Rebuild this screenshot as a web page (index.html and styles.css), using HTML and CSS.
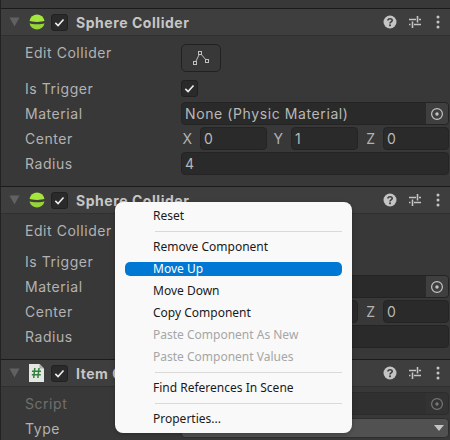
FILE: index.html
```html
<!DOCTYPE html>
<html lang="en">
<head>
<meta charset="utf-8">
<title>Inspector</title>
<link rel="stylesheet" href="styles.css">
</head>
<body>
<svg class="defs" width="0" height="0" aria-hidden="true">
  <symbol id="sphere" viewBox="0 0 16 16">
    <path d="M.5 6.800A7.600 7.600 0 0 1 15.500 6.800C13 8.300 3 8.300 .5 6.800Z" fill="#a5e63c"/>
    <path d="M.5 9.200C3 10.700 13 10.700 15.500 9.200A7.600 7.600 0 0 1 .5 9.200Z" fill="#97d435"/>
  </symbol>
  <symbol id="check" viewBox="0 0 18 18">
    <path d="M4 9.400 7.300 12.600 13.800 5.400" fill="none" stroke="#eee" stroke-width="1.900"/>
  </symbol>
  <symbol id="help" viewBox="0 0 14 14">
    <circle cx="7" cy="7" r="6.500" fill="#c4c4c4"/>
    <path d="M4.900 5.500C5 3.200 9.200 3.200 9.200 5.400 9.200 6.900 7 6.900 7 8.500" fill="none" stroke="#3e3e3e" stroke-width="1.600"/>
    <rect x="6.100" y="9.400" width="1.800" height="1.800" fill="#3e3e3e"/>
  </symbol>
  <symbol id="sliders" viewBox="0 0 14 14">
    <path d="M1 4.500H8M11 4.500H13M9.500 1V7.500M1 9.500H2.500M6 9.500H13M4.500 6.500V13" fill="none" stroke="#c4c4c4" stroke-width="1.600"/>
  </symbol>
  <symbol id="dots" viewBox="0 0 4 14">
    <circle cx="2" cy="2" r="1.500" fill="#c4c4c4"/>
    <circle cx="2" cy="7" r="1.500" fill="#c4c4c4"/>
    <circle cx="2" cy="12" r="1.500" fill="#c4c4c4"/>
  </symbol>
  <symbol id="picker" viewBox="0 0 14 14">
    <circle cx="7" cy="7" r="5.400" fill="none" stroke="currentColor" stroke-width="1.200"/>
    <circle cx="7" cy="7" r="1.700" fill="currentColor"/>
  </symbol>
  <symbol id="tri" viewBox="0 0 10 10">
    <path d="M0 .5H10L5 9.500Z" fill="#616161"/>
  </symbol>
  <symbol id="edit" viewBox="0 0 18 16">
    <path d="M3 13 8 3 15 11" fill="none" stroke="#c0c0c0"/>
    <rect x="1.500" y="11.500" width="3" height="3" fill="#383838" stroke="#c0c0c0"/>
    <rect x="6.500" y="1.500" width="3" height="3" fill="#383838" stroke="#c0c0c0"/>
    <rect x="13.500" y="9.500" width="3" height="3" fill="#383838" stroke="#c0c0c0"/>
  </symbol>
</svg>

<main class="inspector">
  <div class="top-gap"></div>

  <section class="comp">
    <header class="head">
      <svg class="tri"><use href="#tri"/></svg>
      <svg class="ico"><use href="#sphere"/></svg>
      <span class="box"><svg class="tick"><use href="#check"/></svg></span>
      <span class="title">Sphere Collider</span>
      <span class="tools">
        <svg class="tool"><use href="#help"/></svg>
        <svg class="tool"><use href="#sliders"/></svg>
        <svg class="tool-dots"><use href="#dots"/></svg>
      </span>
    </header>
    <div class="body">
      <div class="row row-edit">
        <span class="label">Edit Collider</span>
        <span class="edit-btn"><svg class="edit-ico"><use href="#edit"/></svg></span>
      </div>
      <div class="row row-check">
        <span class="label">Is Trigger</span>
        <span class="box"><svg class="tick"><use href="#check"/></svg></span>
      </div>
      <div class="row">
        <span class="label">Material</span>
        <span class="field">None (Physic Material)<span class="pick"><svg class="pick-ico"><use href="#picker"/></svg></span></span>
      </div>
      <div class="row">
        <span class="label">Center</span>
        <span class="vec">
          <span class="axis">X</span><span class="field">0</span>
          <span class="axis">Y</span><span class="field">1</span>
          <span class="axis">Z</span><span class="field">0</span>
        </span>
      </div>
      <div class="row">
        <span class="label">Radius</span>
        <span class="field">4</span>
      </div>
    </div>
  </section>

  <section class="comp">
    <header class="head">
      <svg class="tri"><use href="#tri"/></svg>
      <svg class="ico"><use href="#sphere"/></svg>
      <span class="box"><svg class="tick"><use href="#check"/></svg></span>
      <span class="title">Sphere Collider</span>
      <span class="tools">
        <svg class="tool"><use href="#help"/></svg>
        <svg class="tool"><use href="#sliders"/></svg>
        <svg class="tool-dots"><use href="#dots"/></svg>
      </span>
    </header>
    <div class="body">
      <div class="row row-edit row-edit-compact">
        <span class="label">Edit Collider</span>
      </div>
      <div class="row row-check">
        <span class="label">Is Trigger</span>
        <span class="box"><svg class="tick"><use href="#check"/></svg></span>
      </div>
      <div class="row">
        <span class="label">Material</span>
        <span class="field"><span class="pick"><svg class="pick-ico"><use href="#picker"/></svg></span></span>
      </div>
      <div class="row">
        <span class="label">Center</span>
        <span class="vec">
          <span class="axis">X</span><span class="field">0</span>
          <span class="axis">Y</span><span class="field">1</span>
          <span class="axis">Z</span><span class="field">0</span>
        </span>
      </div>
      <div class="row">
        <span class="label">Radius</span>
        <span class="field">4</span>
      </div>
    </div>
  </section>

  <section class="comp">
    <header class="head">
      <svg class="tri"><use href="#tri"/></svg>
      <svg class="script-ico" viewBox="0 0 15 18">
        <path d="M0 0H10.500L15 4.500V18H0Z" fill="#e4e6e2"/>
        <path d="M10.500 0V4.500H15Z" fill="#a9aca6"/>
        <path d="M5.800 4 4.700 14M10 4 8.900 14M3 7.300H12M2.800 10.700H11.800" fill="none" stroke="#33803f" stroke-width="1.500"/>
      </svg>
      <span class="box"><svg class="tick"><use href="#check"/></svg></span>
      <span class="title">Item Collector</span>
      <span class="tools">
        <svg class="tool"><use href="#help"/></svg>
        <svg class="tool"><use href="#sliders"/></svg>
        <svg class="tool-dots"><use href="#dots"/></svg>
      </span>
    </header>
    <div class="body body-tight">
      <div class="row">
        <span class="label label-dim">Script</span>
        <span class="field field-dim"><span class="pick pick-dim"><svg class="pick-ico"><use href="#picker"/></svg></span></span>
      </div>
      <div class="row row-type">
        <span class="label">Type</span>
        <span class="select"><span class="caret"></span></span>
      </div>
    </div>
  </section>
</main>

<nav class="menu">
  <div class="item">Reset</div>
  <div class="sep"></div>
  <div class="item">Remove Component</div>
  <div class="item item-active">Move Up</div>
  <div class="item">Move Down</div>
  <div class="item">Copy Component</div>
  <div class="item item-off">Paste Component As New</div>
  <div class="item item-off">Paste Component Values</div>
  <div class="sep"></div>
  <div class="item">Find References In Scene</div>
  <div class="sep"></div>
  <div class="item">Properties...</div>
</nav>
</body>
</html>
```
FILE: styles.css
```css
* { box-sizing: border-box; }

html, body {
  margin: 0;
  height: 440px;
  overflow: hidden;
  background: #383838;
}

body {
  font-family: Inter, "Noto Sans", sans-serif;
  position: relative;
}

.defs { position: absolute; }

.inspector {
  border-left: 1px solid #232323;
  height: 440px;
  overflow: hidden;
}

.top-gap { height: 8px; }

.comp { border-top: 1px solid #1b1b1b; }

.head {
  height: 27px;
  background: #3e3e3e;
  border-bottom: 1px solid #303030;
  display: flex;
  align-items: center;
  padding-left: 8px;
}

.tri { width: 11px; height: 10px; margin-right: 9px; }
.ico { width: 16px; height: 16px; margin-right: 6px; }
.script-ico { width: 15px; height: 18px; margin-right: 7px; }

.box {
  width: 17px;
  height: 17px;
  flex: none;
  background: #2a2a2a;
  border: 1px solid #212121;
  border-radius: 3px;
  display: flex;
  align-items: center;
  justify-content: center;
}

.tick { width: 15px; height: 15px; }

.title {
  margin-left: 8px;
  font-size: 14px;
  font-weight: 700;
  letter-spacing: 0.55px;
  color: #c6c6c6;
}

.tools {
  margin-left: auto;
  display: flex;
  align-items: center;
  gap: 11px;
  padding-right: 10px;
}

.tool { width: 14px; height: 14px; }
.tool-dots { width: 4px; height: 14px; margin-left: 3px; }

.body {
  padding: 8px 1px 11px 24px;
  display: flex;
  flex-direction: column;
  gap: 2px;
}

.body-tight { padding-top: 5px; }

.row {
  display: flex;
  align-items: center;
  height: 23px;
}

.row-edit {
  height: 28px;
  align-items: flex-start;
  margin-bottom: 6px;
}

.row-edit-compact { height: 23px; }

.row-check {
  height: 17px;
  margin-bottom: 3px;
}

.row-type { height: 20px; margin-top: 1px; }

.label {
  width: 156px;
  flex: none;
  font-size: 14px;
  letter-spacing: 0.55px;
  color: #b2b2b2;
}

.row-edit .label { line-height: 18px; }

.label-dim { color: #6f6f6f; }

.edit-btn {
  width: 40px;
  height: 28px;
  background: #383838;
  border: 1px solid #212121;
  border-radius: 5px;
  display: flex;
  align-items: center;
  justify-content: center;
}

.edit-ico { width: 18px; height: 16px; }

.field {
  flex: 1;
  min-width: 0;
  height: 23px;
  position: relative;
  background: #2a2a2a;
  border: 1px solid #242424;
  border-radius: 4px;
  padding-left: 3px;
  font-size: 14px;
  line-height: 21px;
  letter-spacing: 0.6px;
  color: #b8b8b8;
  white-space: nowrap;
}

.field-dim { background: #303030; border-color: #2c2c2c; }

.pick {
  position: absolute;
  top: 0;
  right: 0;
  bottom: 0;
  width: 22px;
  background: #3f3f3f;
  border-radius: 0 3px 3px 0;
  color: #c4c4c4;
  display: flex;
  align-items: center;
  justify-content: center;
}

.pick-dim { background: #333; color: #777; }

.pick-ico { width: 14px; height: 14px; }

.vec {
  flex: 1;
  min-width: 0;
  display: grid;
  grid-template-columns: 19px 67px 24px 67px 25px 1fr;
  align-items: center;
}

.axis {
  font-size: 14px;
  color: #b2b2b2;
  text-align: right;
  padding-right: 8px;
}

.select {
  flex: 1;
  height: 20px;
  position: relative;
  background: #515151;
  border: 1px solid #2e2e2e;
  border-radius: 4px;
}

.caret {
  position: absolute;
  right: 4px;
  top: 6px;
  width: 0;
  height: 0;
  border-left: 5px solid transparent;
  border-right: 5px solid transparent;
  border-top: 6px solid #c4c4c4;
}

.menu {
  position: absolute;
  left: 115px;
  top: 202px;
  width: 237px;
  height: 231px;
  padding: 2px 10px 0;
  background: #f9f9f9;
  border-radius: 8px;
  box-shadow: 0 1px 4px rgba(0, 0, 0, 0.25);
  font-family: "Noto Sans", sans-serif;
  font-size: 12px;
  color: #1a1a1a;
}

.item {
  height: 22px;
  line-height: 23px;
  padding-left: 28px;
  border-radius: 5px;
}

.item-active {
  height: 14px;
  line-height: 14px;
  margin: 5px 0 3px;
  background: #0078d4;
  color: #fff;
}

.item-off { color: #a6a6a6; }

.sep {
  height: 1px;
  margin: 5px 0 3px 30px;
  background: #d9d9d9;
}
```
